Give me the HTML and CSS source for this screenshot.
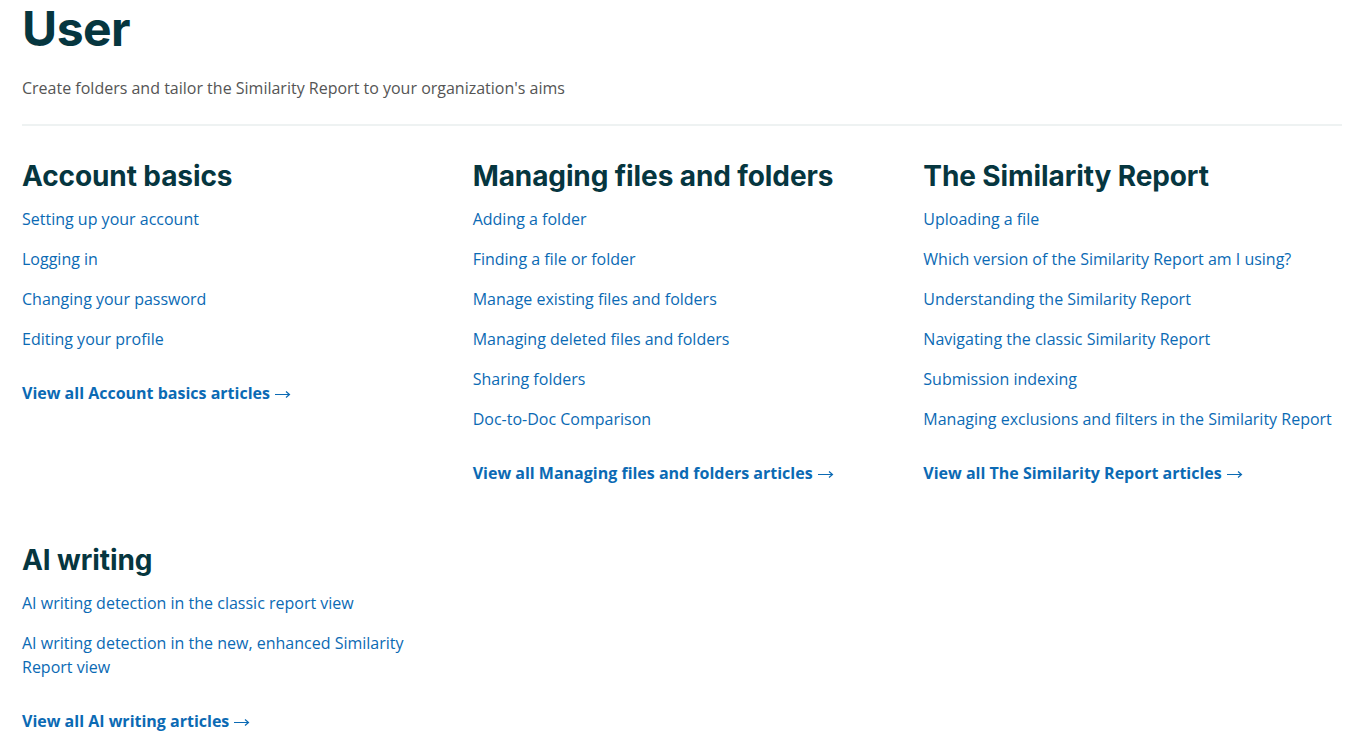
FILE: index.html
```html
<!DOCTYPE html>
<html lang="en">

<head>
    <meta charset="UTF-8">
    <meta name="viewport" content="width=device-width, initial-scale=1.0">
    <title>User</title>
    <link rel="stylesheet" href="styles.css">
</head>

<body>
    <div class="container">
        <header class="page-header">
            <h1>User</h1>
            <p class="lead">Create folders and tailor the Similarity Report to your organization's aims</p>
        </header>

        <div class="sections">
            <section class="section">
                <h2>Account basics</h2>
                <ul class="article-list">
                    <li><a href="#">Setting up your account</a></li>
                    <li><a href="#">Logging in</a></li>
                    <li><a href="#">Changing your password</a></li>
                    <li><a href="#">Editing your profile</a></li>
                </ul>
                <a class="see-all" href="#">View all Account basics articles <svg class="arrow" viewBox="0 0 16 8"><path d="M0 4.5h14.5M11 1.5l3.5 3-3.5 3"/></svg></a>
            </section>

            <section class="section">
                <h2>Managing files and folders</h2>
                <ul class="article-list">
                    <li><a href="#">Adding a folder</a></li>
                    <li><a href="#">Finding a file or folder</a></li>
                    <li><a href="#">Manage existing files and folders</a></li>
                    <li><a href="#">Managing deleted files and folders</a></li>
                    <li><a href="#">Sharing folders</a></li>
                    <li><a href="#">Doc-to-Doc Comparison</a></li>
                </ul>
                <a class="see-all" href="#">View all Managing files and folders articles <svg class="arrow" viewBox="0 0 16 8"><path d="M0 4.5h14.5M11 1.5l3.5 3-3.5 3"/></svg></a>
            </section>

            <section class="section">
                <h2>The Similarity Report</h2>
                <ul class="article-list">
                    <li><a href="#">Uploading a file</a></li>
                    <li><a href="#">Which version of the Similarity Report am I using?</a></li>
                    <li><a href="#">Understanding the Similarity Report</a></li>
                    <li><a href="#">Navigating the classic Similarity Report</a></li>
                    <li><a href="#">Submission indexing</a></li>
                    <li><a href="#">Managing exclusions and filters in the Similarity Report</a></li>
                </ul>
                <a class="see-all" href="#">View all The Similarity Report articles <svg class="arrow" viewBox="0 0 16 8"><path d="M0 4.5h14.5M11 1.5l3.5 3-3.5 3"/></svg></a>
            </section>

            <section class="section">
                <h2>AI writing</h2>
                <ul class="article-list">
                    <li><a href="#">AI writing detection in the classic report view</a></li>
                    <li><a href="#">AI writing detection in the new, enhanced Similarity Report view</a></li>
                </ul>
                <a class="see-all" href="#">View all AI writing articles <svg class="arrow" viewBox="0 0 16 8"><path d="M0 4.5h14.5M11 1.5l3.5 3-3.5 3"/></svg></a>
            </section>
        </div>
    </div>
</body>

</html>
```

FILE: styles.css
```css
body {
    font-family: 'Open Sans', 'Noto Sans', sans-serif;
    margin: 0;
    padding: 0;
    background-color: #fff;
    color: #333;
    font-size: 16px;
    line-height: 24px;
}

.container {
    max-width: 1320px;
    margin: 0 auto;
    padding: 0 28px 0 22px;
}

.page-header {
    border-bottom: 2px solid #eef2f2;
    padding-bottom: 24px;
    margin-bottom: 32px;
}

h1 {
    font-family: Inter, 'Noto Sans', sans-serif;
    font-size: 48px;
    line-height: 58px;
    font-weight: 700;
    letter-spacing: -0.5px;
    color: #06363f;
    margin: 0;
}

.lead {
    margin: 18px 0 0;
    color: #555;
}

.sections {
    display: grid;
    grid-template-columns: repeat(3, 1fr);
    column-gap: 32px;
    row-gap: 57px;
}

h2 {
    font-family: Inter, 'Noto Sans', sans-serif;
    font-size: 28px;
    line-height: 36px;
    font-weight: 700;
    letter-spacing: -0.1px;
    color: #06363f;
    margin: 0 0 13px;
}

.article-list {
    list-style: none;
    margin: 0;
    padding: 0;
}

.article-list li {
    margin-bottom: 16px;
}

a {
    color: #0b6ab4;
    text-decoration: none;
}

.see-all {
    display: inline-block;
    margin-top: 14px;
    font-weight: 700;
}

.arrow {
    width: 16px;
    height: 8px;
    margin-left: 1px;
    vertical-align: 1px;
    fill: none;
    stroke: currentColor;
    stroke-width: 1.2;
}
```
